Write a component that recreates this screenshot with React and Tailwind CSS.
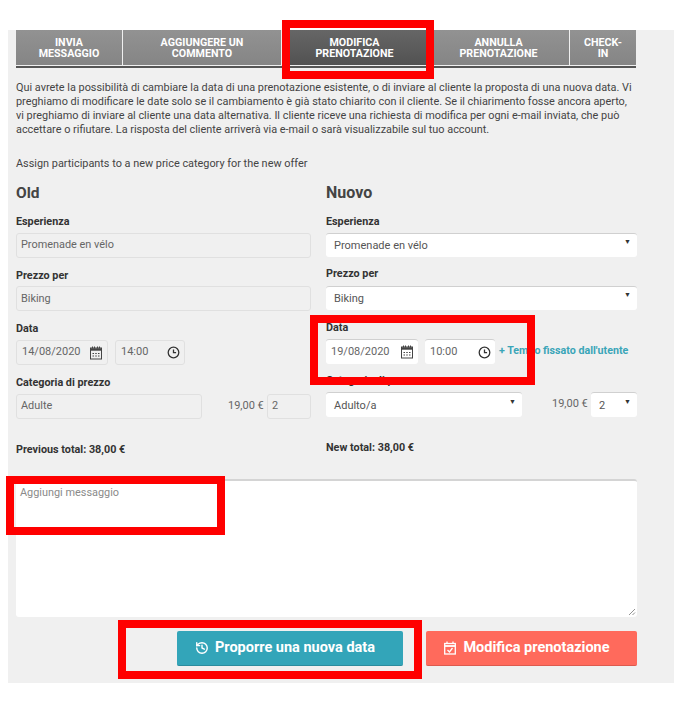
import React from "react";
import { History } from "lucide-react";

const Label = ({ children, className = "" }) => (
  <div className={"text-[10.8px] leading-[12px] font-bold text-[#333] " + className}>{children}</div>
);

const Ro = ({ children, className = "" }) => (
  <div className={"h-[25px] rounded-[3px] border border-[#e0e0e0] bg-[#f0f0f0] flex items-center px-[4px] text-[10.9px] text-[#666] " + className}>
    {children}
  </div>
);

const Sel = ({ children, className = "" }) => (
  <div className={"h-[24px] rounded-[3px] border-t border-t-[#d0d0d0] bg-white flex items-center justify-between pl-[8px] pr-[6px] text-[11px] text-[#555] " + className}>
    <span className="mt-[2px]">{children}</span>
    <span className="text-[7px] leading-none text-[#333] mb-[6px]">▼</span>
  </div>
);

const CalIcon = () => (
  <svg width="14" height="14" viewBox="0 0 14 14" fill="none" stroke="#444" strokeWidth="1">
    <rect x="1.500" y="2" width="11" height="11" />
    <path d="M1.500 3.500h11" strokeWidth="2.400" />
    <path d="M3.500 .5v2M5.500 .5v2M8.500 .5v2M10.500 .5v2" />
    <path d="M3.500 7.500h1.500M6.250 7.500h1.500M9 7.500h1.500M3.500 10h1.500M6.250 10h1.500M9 10h1.500" strokeWidth="1.200" />
  </svg>
);

const ClockIcon = () => (
  <svg width="13" height="13" viewBox="0 0 13 13" fill="none" stroke="#333" strokeWidth="1.300">
    <circle cx="6.500" cy="6.500" r="5.300" />
    <path d="M6.500 3.500v3.200h2.600" />
  </svg>
);

const DateTime = ({ date, time, ro }) => {
  const box = ro
    ? "h-[25px] rounded-[3px] border border-[#e0e0e0] bg-[#f0f0f0]"
    : "h-[25px] rounded-[3px] border-t border-t-[#d0d0d0] bg-white";
  return (
    <div className="flex gap-[7px]">
      <div className={box + " w-[92px] flex items-center justify-between pl-[5px] pr-[4px] text-[11px] text-[#666]"}>
        <span>{date}</span>
        <CalIcon />
      </div>
      <div className={box + " w-[70px] flex items-center justify-between pl-[5px] pr-[4px] text-[11px] text-[#666]"}>
        <span>{time}</span>
        <ClockIcon />
      </div>
    </div>
  );
};

const Tab = ({ w, children, active }) => (
  <div
    className={
      "h-[35px] flex items-center justify-center text-center text-[10.7px] leading-[11px] font-bold uppercase text-white " +
      (active
        ? "bg-gradient-to-b from-[#666666] to-[#525252]"
        : "bg-gradient-to-b from-[#929292] to-[#858585]") +
      " " + w
    }
  >
    <span>{children}</span>
  </div>
);

const RedBox = ({ className }) => (
  <div className={"absolute border-[8px] border-[#ff0000] " + className} />
);

export default function App() {
  return (
    <div className="relative w-[674px] h-[705px] bg-white overflow-hidden" style={{ fontFamily: "Roboto, sans-serif" }}>
      <div className="h-[30px]" />
      <div className="ml-[8px] w-[666px] h-[653px] bg-[#f0f0f0] px-[8px]">
        <div className="w-[620px]">
          <div className="flex gap-[1px] border-b-[2px] border-b-[#555] pb-[1px] h-[38px]">
            <Tab w="w-[106px]">Invia<br />messaggio</Tab>
            <Tab w="w-[158px]">Aggiungere un<br />commento</Tab>
            <Tab w="w-[145px]" active>Modifica<br />prenotazione</Tab>
            <Tab w="w-[141px]">Annulla<br />prenotazione</Tab>
            <Tab w="w-[66px]">Check-<br />in</Tab>
          </div>
          <p className="mt-[13px] text-[10.88px] leading-[14px] text-[#444] w-[620px]">
            Qui avrete la possibilità di cambiare la data di una prenotazione esistente, o di inviare al cliente la proposta di una nuova data. Vi preghiamo di modificare le date solo se il cambiamento è già stato chiarito con il cliente. Se il chiarimento fosse ancora aperto, vi preghiamo di inviare al cliente una data alternativa. Il cliente riceve una richiesta di modifica per ogni e-mail inviata, che può accettare o rifiutare. La risposta del cliente arriverà via e-mail o sarà visualizzabile sul tuo account.
          </p>
          <p className="mt-[20px] text-[10.88px] leading-[14px] text-[#444]">Assign participants to a new price category for the new offer</p>
        </div>

        <div className="flex gap-[15px] mt-[13px] w-[621px]">
          <div className="w-[295px]">
            <h2 className="text-[15.500px] leading-[18px] font-bold text-[#444]">Old</h2>
            <Label className="mt-[14px]">Esperienza</Label>
            <Ro className="mt-[5px]">Promenade en vélo</Ro>
            <Label className="mt-[12px]">Prezzo per</Label>
            <Ro className="mt-[4px]"><span className="mt-[2px]">Biking</span></Ro>
            <Label className="mt-[12px]">Data</Label>
            <div className="mt-[5px]"><DateTime date="14/08/2020" time="14:00" ro /></div>
            <Label className="mt-[12px]">Categoria di prezzo</Label>
            <div className="mt-[5px] flex items-center">
              <Ro className="w-[186px]">Adulte</Ro>
              <span className="ml-[26px] w-[38px] text-[11px] text-[#666]">19,00 €</span>
              <Ro className="ml-[1px] w-[44px]">2</Ro>
            </div>
            <Label className="mt-[25px]">Previous total: 38,00 €</Label>
          </div>
          <div className="w-[311px]">
            <h2 className="text-[16px] leading-[18px] font-bold text-[#444]">Nuovo</h2>
            <Label className="mt-[14px]">Esperienza</Label>
            <Sel className="mt-[5px]">Promenade en vélo</Sel>
            <Label className="mt-[11px]">Prezzo per</Label>
            <Sel className="mt-[6px]">Biking</Sel>
            <Label className="mt-[12px]">Data</Label>
            <div className="mt-[5px] flex items-center">
              <DateTime date="19/08/2020" time="10:00" />
              <span className="ml-[4px] text-[10.700px] font-bold text-[#3aa5b8] whitespace-nowrap">+ Tempo fissato dall'utente</span>
            </div>
            <Label className="mt-[11px]">Categoria di prezzo</Label>
            <div className="mt-[5px] flex items-center">
              <Sel className="w-[196px] h-[25px]">Adulto/a</Sel>
              <span className="ml-[30px] w-[38px] text-[11px] text-[#666]">19,00 €</span>
              <Sel className="ml-[1px] w-[46px] h-[25px]">2</Sel>
            </div>
            <Label className="mt-[25px]">New total: 38,00 €</Label>
          </div>
        </div>

        <div className="relative mt-[23px] w-[621px] h-[138px] rounded-[3px] border-t-2 border-t-[#d4d4d4] bg-white px-[4px] pt-[5px] text-[10.900px] leading-[14px] text-[#8a8a8a]">
          Aggiungi messaggio
          <svg className="absolute right-[1px] bottom-[1px]" width="8" height="8" viewBox="0 0 8 8">
            <path d="M1 7 7 1M4.500 7 7 4.500" stroke="#777" strokeWidth="0.8" fill="none" />
          </svg>
        </div>

        <div className="flex justify-end gap-[23px] mt-[14px] w-[621px]">
          <button className="w-[226px] h-[35px] rounded-[2px] bg-[#33a5b9] border-b border-b-[#2b8c9e] pr-[10px] text-white text-[14.500px] font-bold flex items-center justify-center gap-[6px]">
            <History size={14} strokeWidth={2.400} />
            <span>Proporre una nuova data</span>
          </button>
          <button className="w-[211px] h-[35px] rounded-[2px] bg-[#ff6a5c] border-b border-b-[#dc5a4e] pr-[10px] text-white text-[14.500px] font-bold flex items-center justify-center gap-[6px]">
            <svg width="14" height="14" viewBox="0 0 14 14" fill="none" stroke="#fff" strokeWidth="1.300">
              <rect x="1.700" y="2.500" width="10.600" height="10.500" />
              <path d="M1.700 5h10.600" strokeWidth="1.800" />
              <path d="M4 .5v2.500M10 .5v2.500" />
              <path d="M4.500 9 6.500 11 9.500 7" />
            </svg>
            <span>Modifica prenotazione</span>
          </button>
        </div>
      </div>

      <RedBox className="left-[282px] top-[20px] w-[152px] h-[59px]" />
      <RedBox className="left-[310px] top-[315px] w-[225px] h-[70px]" />
      <RedBox className="left-[6px] top-[476px] w-[219px] h-[59px]" />
      <RedBox className="left-[118px] top-[620px] w-[304px] h-[59px]" />
    </div>
  );
}
